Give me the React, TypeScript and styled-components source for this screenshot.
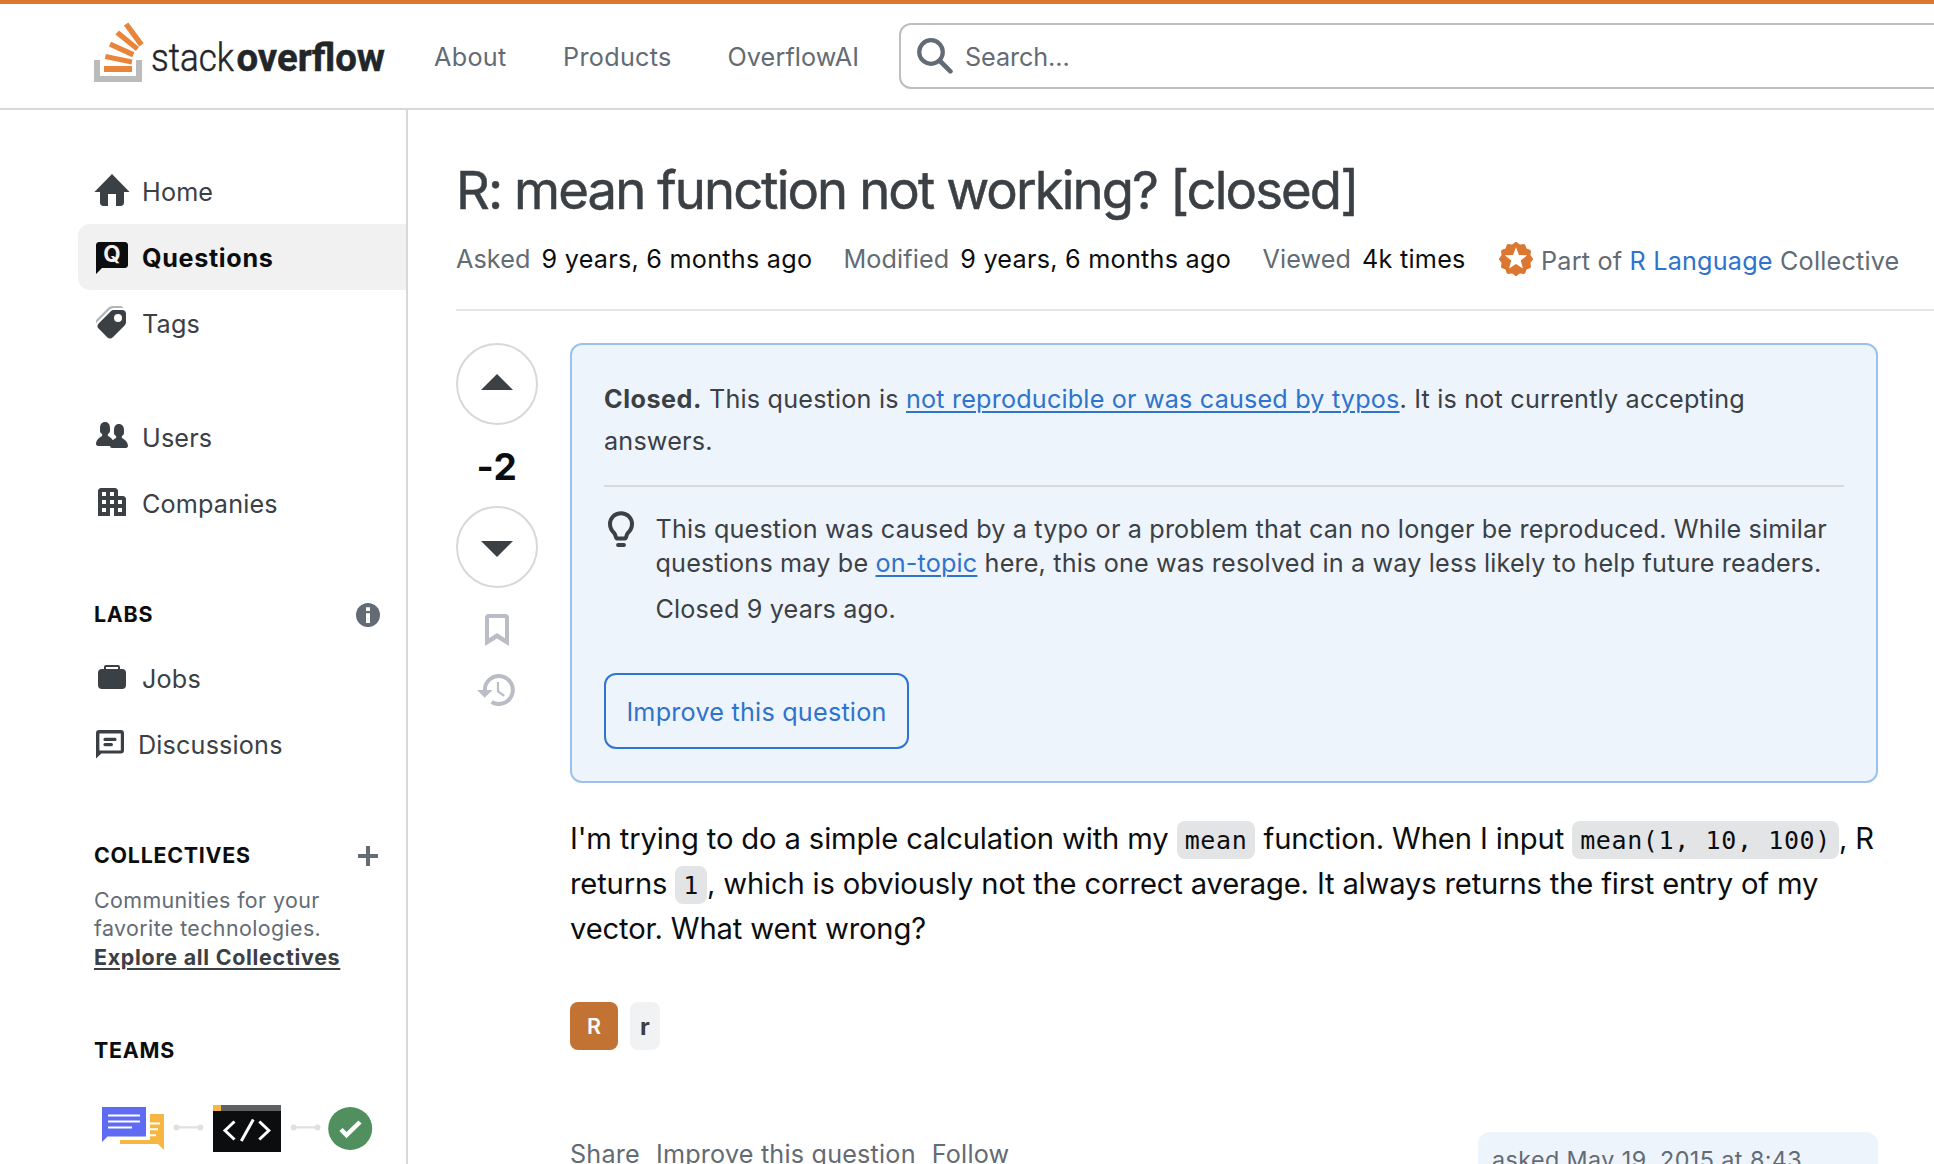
import React from "react";
import styled, { createGlobalStyle } from "styled-components";

const Global = createGlobalStyle`
  *, *::before, *::after { box-sizing: border-box; }
  html, body { margin: 0; padding: 0; background: #fff; }
  body { overflow: hidden; font-family: Inter, "Liberation Sans", sans-serif; font-size: 25.2px; color: #0c0d0e; }
  h1, p { margin: 0; font-weight: 400; }
`;

const Page = styled.div`
  width: 100%;
  height: 1164px;
  overflow: hidden;
  display: flex;
  flex-direction: column;
`;

const TopBar = styled.header`
  flex: none;
  height: 110px;
  border-top: 4px solid #dc7731;
  border-bottom: 2px solid #d6d9dc;
  display: flex;
  align-items: flex-start;
  padding-left: 94px;
  overflow: hidden;
`;

const LogoLink = styled.a`
  flex: none;
  display: block;
  width: 340px;
  height: 104px;
`;

const TopNav = styled.nav`
  flex: none;
  width: 465px;
  height: 104px;
  display: flex;
  align-items: center;
`;

const TopLink = styled.a<{ $w: number; $ls?: number }>`
  flex: none;
  width: ${(p) => p.$w}px;
  padding-top: 1px;
  line-height: 32px;
  color: #636b74;
  white-space: nowrap;
  letter-spacing: ${(p) => p.$ls ?? 0.3}px;
`;

const SearchBox = styled.div`
  flex: none;
  width: 1100px;
  height: 66px;
  margin-top: 19px;
  border: 2px solid #babfc4;
  border-radius: 12px;
  display: flex;
  align-items: center;
  gap: 12px;
  padding-left: 16px;
  color: #636b74;
  letter-spacing: -0.1px;
  & > span { padding-top: 2px; }
`;

const Body = styled.div`
  flex: 1;
  display: flex;
  min-height: 0;
`;

const Sidebar = styled.aside`
  flex: none;
  width: 408px;
  border-right: 2px solid #d6d9dc;
  padding: 48px 0 0 78px;
  overflow: hidden;
`;

const NavItem = styled.a<{ $active?: boolean; $gap?: number }>`
  display: flex;
  align-items: flex-start;
  gap: ${(p) => p.$gap ?? 12}px;
  height: 66px;
  padding: 14px 0 0 16px;
  border-radius: 12px 0 0 12px;
  background: ${(p) => (p.$active ? "#f1f1f1" : "transparent")};
  color: ${(p) => (p.$active ? "#0c0d0e" : "#3b4045")};
  font-weight: ${(p) => (p.$active ? 700 : 400)};
  letter-spacing: ${(p) => (p.$active ? 0.65 : 0.16)}px;
  line-height: 40px;
`;

const NavGroup = styled.div<{ $mt?: number }>`
  margin-top: ${(p) => p.$mt ?? 0}px;
`;

const SectionHead = styled.div<{ $mt: number }>`
  margin-top: ${(p) => p.$mt}px;
  height: 32px;
  padding: 0 26px 2px 16px;
  display: flex;
  align-items: center;
  justify-content: space-between;
  font-size: 21.4px;
  font-weight: 700;
  letter-spacing: 0.75px;
  line-height: 30px;
  & > svg { margin-top: 2px; }
`;

const Blurb = styled.div`
  padding: 14px 0 0 16px;
  font-size: 21.4px;
  line-height: 28.4px;
  letter-spacing: 0.4px;
  color: #636b74;
`;

const BoldLink = styled.a`
  display: block;
  color: #3b4045;
  font-weight: 700;
  letter-spacing: 0.73px;
  text-decoration: underline;
  text-decoration-thickness: 2px;
  text-underline-offset: 3px;
`;

const TeamsArt = styled.div`
  margin: 36px 0 0 16px;
`;

const Main = styled.main`
  flex: 1;
  min-width: 0;
  padding: 48px 0 0 48px;
`;

const Title = styled.h1`
  height: 70px;
  line-height: 64px;
  font-size: 52.6px;
  letter-spacing: -1.9px;
  color: #3b4045;
  -webkit-text-stroke: 0.5px #3b4045;
  white-space: nowrap;
`;

const MetaRow = styled.div`
  height: 83px;
  padding-top: 15px;
  border-bottom: 2px solid #e3e6e8;
  display: flex;
  line-height: 32px;
  white-space: nowrap;
`;

const Meta = styled.div<{ $w: number }>`
  flex: none;
  width: ${(p) => p.$w}px;
  display: flex;
  gap: 11px;
`;

const MetaLabel = styled.span`
  color: #636b74;
  letter-spacing: 0.1px;
`;

const MetaValue = styled.span`
  color: #0c0d0e;
  letter-spacing: 0.25px;
`;

const Collective = styled.div`
  display: flex;
  align-items: flex-start;
  gap: 8px;
  color: #636b74;
  letter-spacing: 0.2px;
  & > span { padding-top: 2px; }
  & > svg { margin-top: -1px; }
`;

const Link = styled.a<{ $underline?: boolean }>`
  color: #2e73cc;
  text-decoration: ${(p) => (p.$underline ? "underline" : "none")};
  text-decoration-thickness: 2px;
  text-underline-offset: 3px;
`;

const Post = styled.div`
  display: flex;
  gap: 32px;
  padding-top: 32px;
`;

const Votes = styled.div`
  flex: none;
  width: 82px;
  display: flex;
  flex-direction: column;
  align-items: center;
`;

const VoteButton = styled.button<{ $down?: boolean }>`
  width: 82px;
  height: 82px;
  padding: ${(p) => (p.$down ? "4px 0 0" : "0 0 4px")};
  border: 2px solid #d6d9dc;
  border-radius: 50%;
  background: #fff;
  display: grid;
  place-items: center;
`;

const Score = styled.div`
  height: 81px;
  line-height: 81px;
  padding-top: 1px;
  font-size: 37px;
  font-weight: 700;
  letter-spacing: 0.5px;
`;

const VoteIcon = styled.div<{ $mt: number; $mr?: number }>`
  margin-top: ${(p) => p.$mt}px;
  margin-right: ${(p) => p.$mr ?? 0}px;
  line-height: 0;
`;

const PostMain = styled.div`
  flex: none;
  width: 1308px;
`;

const Notice = styled.section`
  height: 440px;
  padding: 34px 32px 0;
  border: 2px solid #9bc1ef;
  border-radius: 12px;
  background: #eef4fc;
  color: #3b4045;
`;

const NoticeHead = styled.p`
  height: 108px;
  line-height: 41.6px;
  letter-spacing: 0.18px;
  border-bottom: 2px solid #d6d9dc;
  & > b { letter-spacing: 0.5px; }
`;

const NoticeBody = styled.div`
  display: flex;
  padding-top: 25px;
`;

const NoticeIcon = styled.div`
  flex: none;
  width: 51.5px;
  margin-top: -2px;
  line-height: 0;
`;

const NoticeText = styled.div`
  line-height: 34px;
  letter-spacing: 0.16px;
  white-space: nowrap;
  & > p + p { margin-top: 12px; }
`;

const ImproveButton = styled.button`
  display: block;
  width: 305px;
  height: 76px;
  margin-top: 47px;
  padding: 1px 0 0;
  border: 2px solid #2e75cf;
  border-radius: 12px;
  background: transparent;
  color: #2e73cc;
  font: inherit;
  letter-spacing: 0.22px;
`;

const Prose = styled.div`
  margin-top: 33px;
  font-size: 29.2px;
  line-height: 45px;
  color: #0c0d0e;
  white-space: nowrap;
`;

const ProseLine = styled.div<{ $ls: number }>`
  height: 45px;
  letter-spacing: ${(p) => p.$ls}px;
`;

const Code = styled.code`
  display: inline-block;
  height: 38px;
  line-height: 40px;
  padding: 0 8px;
  border-radius: 8px;
  background: #e3e4e6;
  font-family: "DejaVu Sans Mono", monospace;
  font-size: 25px;
  letter-spacing: 0.62px;
`;

const Tags = styled.div`
  display: flex;
  gap: 12px;
  margin-top: 51px;
`;

const Tag = styled.a<{ $w: number; $solid?: boolean }>`
  width: ${(p) => p.$w}px;
  height: 48px;
  border-radius: 8px;
  display: grid;
  place-items: center;
  font-size: ${(p) => (p.$solid ? 21.5 : 24)}px;
  font-weight: ${(p) => (p.$solid ? 600 : 700)};
  color: ${(p) => (p.$solid ? "#fff" : "#3b4045")};
  background: ${(p) => (p.$solid ? "#c27334" : "#f1f2f3")};
`;

const PostFooter = styled.div`
  display: flex;
  justify-content: space-between;
  margin-top: 82px;
`;

const Actions = styled.div`
  display: flex;
  gap: 16px;
  padding-top: 6px;
  line-height: 32px;
  color: #636b74;
  letter-spacing: 0.2px;
`;

const UserCard = styled.div`
  width: 400px;
  height: 130px;
  padding: 12px 14px;
  border-radius: 12px;
  background: #eef4fc;
  color: #636b74;
  font-size: 23.3px;
  line-height: 32px;
  letter-spacing: 0.43px;
  white-space: nowrap;
`;

const Logo = () => (
  <svg width="300" height="104" viewBox="94 4 300 104">
    <path fill="#bcbbbb" d="M94 60h6v16h36V60h6v22H94z" />
    <g fill="#e9853b">
      <path d="M104 66h28v6h-28z" />
      <path d="M105.8 54l26.6 5.4-.9 5-26.6-5.3z" />
      <path d="M111 41.7l23.4 10.6-2.2 5L109 46.5z" />
      <path d="M119 30.6l20 16.4-3.1 4-20.5-16.4z" />
      <path d="M128.3 22.6l15.4 20.6-4.4 3.2-15.4-21z" />
    </g>
    <text x="151" y="71.2" fontFamily="Roboto, sans-serif" fontWeight="300" fontSize="39.5" fill="#232629" stroke="#232629" strokeWidth=".5" textLength="83" lengthAdjust="spacingAndGlyphs">stack</text>
    <text x="236.5" y="71.2" fontFamily="Roboto, sans-serif" fontWeight="700" fontSize="39.5" fill="#232629" stroke="#232629" strokeWidth=".5" textLength="148.5" lengthAdjust="spacingAndGlyphs">overflow</text>
  </svg>
);

const SearchIcon = () => (
  <svg width="36" height="36" viewBox="0 0 36 36" fill="none" stroke="#636b74">
    <circle cx="14" cy="14" r="11.8" strokeWidth="4.2" />
    <path d="M23 23l10.4 10.4" strokeWidth="4.6" strokeLinecap="round" />
  </svg>
);

const Glyph = ({ children }: { children: React.ReactNode }) => (
  <svg width="36" height="36" viewBox="0 0 18 18" fill="currentColor" overflow="visible">
    {children}
  </svg>
);

const HomeIcon = () => (
  <Glyph><path d="M9 1L.2 10H3v5.3C3 16.3 3.7 17 4.7 17H7v-6h4v6h2.3c1 0 1.7-.7 1.7-1.7V10h2.8z" /></Glyph>
);
const QuestionsIcon = () => (
  <Glyph>
    <path d="M4 15l-3 3V3.5C1 2.7 1.7 2 2.5 2h13c.8 0 1.5.7 1.5 1.5v10c0 .8-.7 1.5-1.5 1.5z" />
    <text x="9" y="12.1" textAnchor="middle" fill="#f1f1f1" letterSpacing="0" fontFamily="Inter, sans-serif" fontWeight="700" fontSize="11.2">Q</text>
  </Glyph>
);
const TagsIcon = () => (
  <Glyph>
    <path opacity=".4" d="M9.24 1a3 3 0 0 0-2.12.88l-5.7 5.7a2 2 0 0 0-.38 2.31 3 3 0 0 1 .67-1.01l6-6A3 3 0 0 1 9.83 2H14a3 3 0 0 1 .79.1A2 2 0 0 0 13 1z" />
    <path d="M9.83 3a2 2 0 0 0-1.42.59l-6 6a2 2 0 0 0 0 2.82L6.6 16.6a2 2 0 0 0 2.82 0l6-6A2 2 0 0 0 16 9.17V5a2 2 0 0 0-2-2zM12 9a2 2 0 1 1 0-4 2 2 0 0 1 0 4" />
  </Glyph>
);
const UsersIcon = () => (
  <Glyph>
    <path d="M17 14c0 .44-.45 1-1 1H9a1 1 0 0 1-1-1H2c-.54 0-1-.56-1-1 0-2.63 3-4 3-4s.23-.4 0-1c-.84-.62-1.06-.59-1-3s1.37-3 2.5-3 2.44.58 2.5 3-.16 2.38-1 3c-.23.59 0 1 0 1s1.55.71 2.42 2.09c.78-.72 1.58-1.1 1.58-1.1s.23-.4 0-1c-.84-.61-1.06-.58-1-3s1.37-3 2.5-3 2.44.59 2.5 3c.05 2.42-.16 2.39-1 3-.23.6 0 1 0 1s3 1.38 3 4" />
  </Glyph>
);
const CompaniesIcon = () => (
  <Glyph>
    <path fillRule="evenodd" d="M3.5 2h7c.8 0 1.5.7 1.5 1.5V6h2.5c.8 0 1.5.7 1.5 1.5V16h-6v-4H8v4H2V3.5C2 2.7 2.7 2 3.5 2zM4 4v2h2V4zm4 0v2h2V4zM4 8v2h2V8zm4 0v2h2V8zm4 0v2h2V8zm-8 4v2h2v-2zm8 0v2h2v-2z" />
  </Glyph>
);
const JobsIcon = () => (
  <Glyph>
    <rect x="2" y="5" width="14" height="10" rx="2" />
    <path fill="none" stroke="currentColor" d="M5.5 5.2V4c0-.3.2-.5.5-.5h6c.3 0 .5.2.5.5v1.2" />
  </Glyph>
);
const DiscussionsIcon = () => (
  <Glyph>
    <path fillRule="evenodd" d="M1 16.7V4c0-.9.6-1.5 1.5-1.5h11c.9 0 1.5.6 1.5 1.5v8.8c0 .9-.6 1.5-1.5 1.5H3.7zM2.7 4.2v8.5h10.7V4.2z" />
    <path fill="none" stroke="currentColor" strokeWidth="1.6" strokeLinecap="round" d="M5.5 7.2h5M5.5 9.8h3.2" />
  </Glyph>
);
const InfoIcon = () => (
  <svg width="24" height="24" viewBox="0 0 24 24">
    <circle cx="12" cy="12" r="12" fill="#636b74" />
    <path fill="#fff" d="M10 4.3h4V8h-4zM10 10.3h4V20h-4z" />
  </svg>
);
const PlusIcon = () => (
  <svg width="24" height="24" viewBox="0 0 24 24">
    <path stroke="#636b74" strokeWidth="4" d="M12 2v20M2 12h20" />
  </svg>
);

const TeamsDrawing = () => (
  <svg width="290" height="60" viewBox="94 1103 290 60">
    <path fill="#f5b642" d="M150 1114h14v36l-6-6h-38v-4h30z" />
    <path stroke="#fff" strokeWidth="2" d="M150 1123.5h10M150 1129.3h8M150 1135.3h6" />
    <path fill="#5e6bf2" d="M102 1107h44v29.5h-38.5l-5.5 5.5z" />
    <path stroke="#fff" strokeWidth="2" d="M108 1115.5h32M108 1121.5h32M108 1127.5h24" />
    <path stroke="#dfe0e1" strokeWidth="2.4" d="M176 1127.4h25M294 1127.4h24" />
    <g fill="#dfe0e1">
      <circle cx="176.5" cy="1127.4" r="3" />
      <circle cx="200.3" cy="1127.4" r="3" />
      <circle cx="293.7" cy="1127.4" r="3" />
      <circle cx="317.5" cy="1127.4" r="3" />
    </g>
    <path fill="#0c0d0e" d="M213 1105h68v47h-68z" />
    <path fill="#5e6062" d="M221 1105h60v6h-60z" />
    <path fill="#f5b642" d="M213 1105h8v6h-8z" />
    <path fill="none" stroke="#fff" strokeWidth="3" d="M234.5 1121.5l-9.5 9 9.5 9M253.3 1119.5l-12 21.5M259.3 1121.5l9.5 9-9.5 9" />
    <ellipse cx="350.2" cy="1128.5" rx="22" ry="21.5" fill="#518f5e" />
    <path fill="none" stroke="#fff" strokeWidth="4.5" d="M341 1129.5l5.5 5.5 13.5-13" />
  </svg>
);

const BadgeIcon = () => {
  const pts = Array.from({ length: 96 }, (_, i) => {
    const a = (i / 96) * Math.PI * 2;
    const r = 16 + Math.cos(a * 12);
    return `${(17 + r * Math.sin(a)).toFixed(2)},${(17 - r * Math.cos(a)).toFixed(2)}`;
  }).join(" ");
  const star = Array.from({ length: 10 }, (_, i) => {
    const a = (i / 10) * Math.PI * 2;
    const r = i % 2 ? 5 : 11.8;
    return `${(17 + r * Math.sin(a)).toFixed(2)},${(17 - r * Math.cos(a)).toFixed(2)}`;
  }).join(" ");
  return (
    <svg width="34" height="34" viewBox="0 0 34 34">
      <polygon points={pts} fill="#dc7731" />
      <polygon points={star} fill="#fff" />
    </svg>
  );
};

const BulbIcon = () => (
  <svg width="34" height="38" viewBox="0 0 34 38" fill="none" stroke="#3b4045">
    <path strokeWidth="4" strokeLinejoin="round" d="M17 3.2c-6.3 0-11 4.7-11 10.8 0 4 1.7 6.7 4.3 9.2 1.4 1.4 1.4 5.3 2.6 5.3h8.2c1.2 0 1.2-3.9 2.6-5.3C26.3 20.7 28 18 28 14c0-6.1-4.7-10.8-11-10.8z" />
    <path strokeWidth="3.8" strokeLinecap="round" d="M14 35h6" />
  </svg>
);

const BookmarkIcon = () => (
  <svg width="24" height="32" viewBox="0 0 24 32">
    <path fill="#babdc6" fillRule="evenodd" d="M3.5 0h17C22.5 0 24 1.5 24 3.5V32l-12-7.6L0 32V3.5C0 1.5 1.5 0 3.5 0zM4 4v20.3l8-5.2 8 5.2V4z" />
  </svg>
);

const HistoryIcon = () => (
  <svg width="38" height="32" viewBox="0 0 38 32">
    <g fill="none" stroke="#babdc6">
      <path strokeWidth="4" d="M7.8 17V16a14 14 0 1 1 6.8 12" />
      <path strokeWidth="2.2" d="M21 8v9.5l6.3 4.3" />
    </g>
    <path fill="#babdc6" d="M0 16h15.5L7.7 23.7z" />
  </svg>
);

const Arrow = ({ down }: { down?: boolean }) => (
  <svg width="32" height="16" viewBox="0 0 32 16">
    <path fill="#3b4045" d={down ? "M0 0h32L16 16z" : "M0 16h32L16 0z"} />
  </svg>
);

export default function App() {
  return (
    <Page>
      <Global />
      <TopBar>
        <LogoLink><Logo /></LogoLink>
        <TopNav>
          <TopLink $w={129}>About</TopLink>
          <TopLink $w={164.5}>Products</TopLink>
          <TopLink $w={160} $ls={0.1}>OverflowAI</TopLink>
        </TopNav>
        <SearchBox><SearchIcon /><span>Search…</span></SearchBox>
      </TopBar>
      <Body>
        <Sidebar>
          <NavItem><HomeIcon />Home</NavItem>
          <NavItem $active><QuestionsIcon />Questions</NavItem>
          <NavItem><TagsIcon />Tags</NavItem>
          <NavGroup $mt={48}>
            <NavItem><UsersIcon />Users</NavItem>
            <NavItem><CompaniesIcon />Companies</NavItem>
          </NavGroup>
          <SectionHead $mt={63}>LABS<InfoIcon /></SectionHead>
          <NavGroup $mt={14}>
            <NavItem><JobsIcon />Jobs</NavItem>
            <NavItem $gap={8}><DiscussionsIcon />Discussions</NavItem>
          </NavGroup>
          <SectionHead $mt={63}>COLLECTIVES<PlusIcon /></SectionHead>
          <Blurb>
            Communities for your<br />favorite technologies.
            <BoldLink>Explore all Collectives</BoldLink>
          </Blurb>
          <SectionHead $mt={64}>TEAMS</SectionHead>
          <TeamsArt><TeamsDrawing /></TeamsArt>
        </Sidebar>
        <Main>
          <Title>R: mean function not working? [closed]</Title>
          <MetaRow>
            <Meta $w={387.5}><MetaLabel>Asked</MetaLabel><MetaValue>9 years, 6 months ago</MetaValue></Meta>
            <Meta $w={419}><MetaLabel>Modified</MetaLabel><MetaValue>9 years, 6 months ago</MetaValue></Meta>
            <Meta $w={236.5}><MetaLabel>Viewed</MetaLabel><MetaValue>4k times</MetaValue></Meta>
            <Collective><BadgeIcon /><span>Part of <Link>R Language</Link> Collective</span></Collective>
          </MetaRow>
          <Post>
            <Votes>
              <VoteButton><Arrow /></VoteButton>
              <Score>-2</Score>
              <VoteButton $down><Arrow down /></VoteButton>
              <VoteIcon $mt={26}><BookmarkIcon /></VoteIcon>
              <VoteIcon $mt={28} $mr={3}><HistoryIcon /></VoteIcon>
            </Votes>
            <PostMain>
              <Notice>
                <NoticeHead>
                  <b>Closed.</b> This question is <Link $underline>not reproducible or was caused by typos</Link>. It is not currently accepting<br />answers.
                </NoticeHead>
                <NoticeBody>
                  <NoticeIcon><BulbIcon /></NoticeIcon>
                  <NoticeText>
                    <p>
                      This question was caused by a typo or a problem that can no longer be reproduced. While similar<br />
                      questions may be <Link $underline>on-topic</Link> here, this one was resolved in a way less likely to help future readers.
                    </p>
                    <p>Closed 9 years ago.</p>
                  </NoticeText>
                </NoticeBody>
                <ImproveButton>Improve this question</ImproveButton>
              </Notice>
              <Prose>
                <ProseLine $ls={-0.13}>I'm trying to do a simple calculation with my <Code>mean</Code> function. When I input <Code>mean(1, 10, 100)</Code>, R</ProseLine>
                <ProseLine $ls={-0.17}>returns <Code>1</Code>, which is obviously not the correct average. It always returns the first entry of my</ProseLine>
                <ProseLine $ls={-0.15}>vector. What went wrong?</ProseLine>
              </Prose>
              <Tags><Tag $w={48} $solid>R</Tag><Tag $w={30}>r</Tag></Tags>
              <PostFooter>
                <Actions><span>Share</span><span>Improve this question</span><span>Follow</span></Actions>
                <UserCard>asked May 19, 2015 at 8:43</UserCard>
              </PostFooter>
            </PostMain>
          </Post>
        </Main>
      </Body>
    </Page>
  );
}
